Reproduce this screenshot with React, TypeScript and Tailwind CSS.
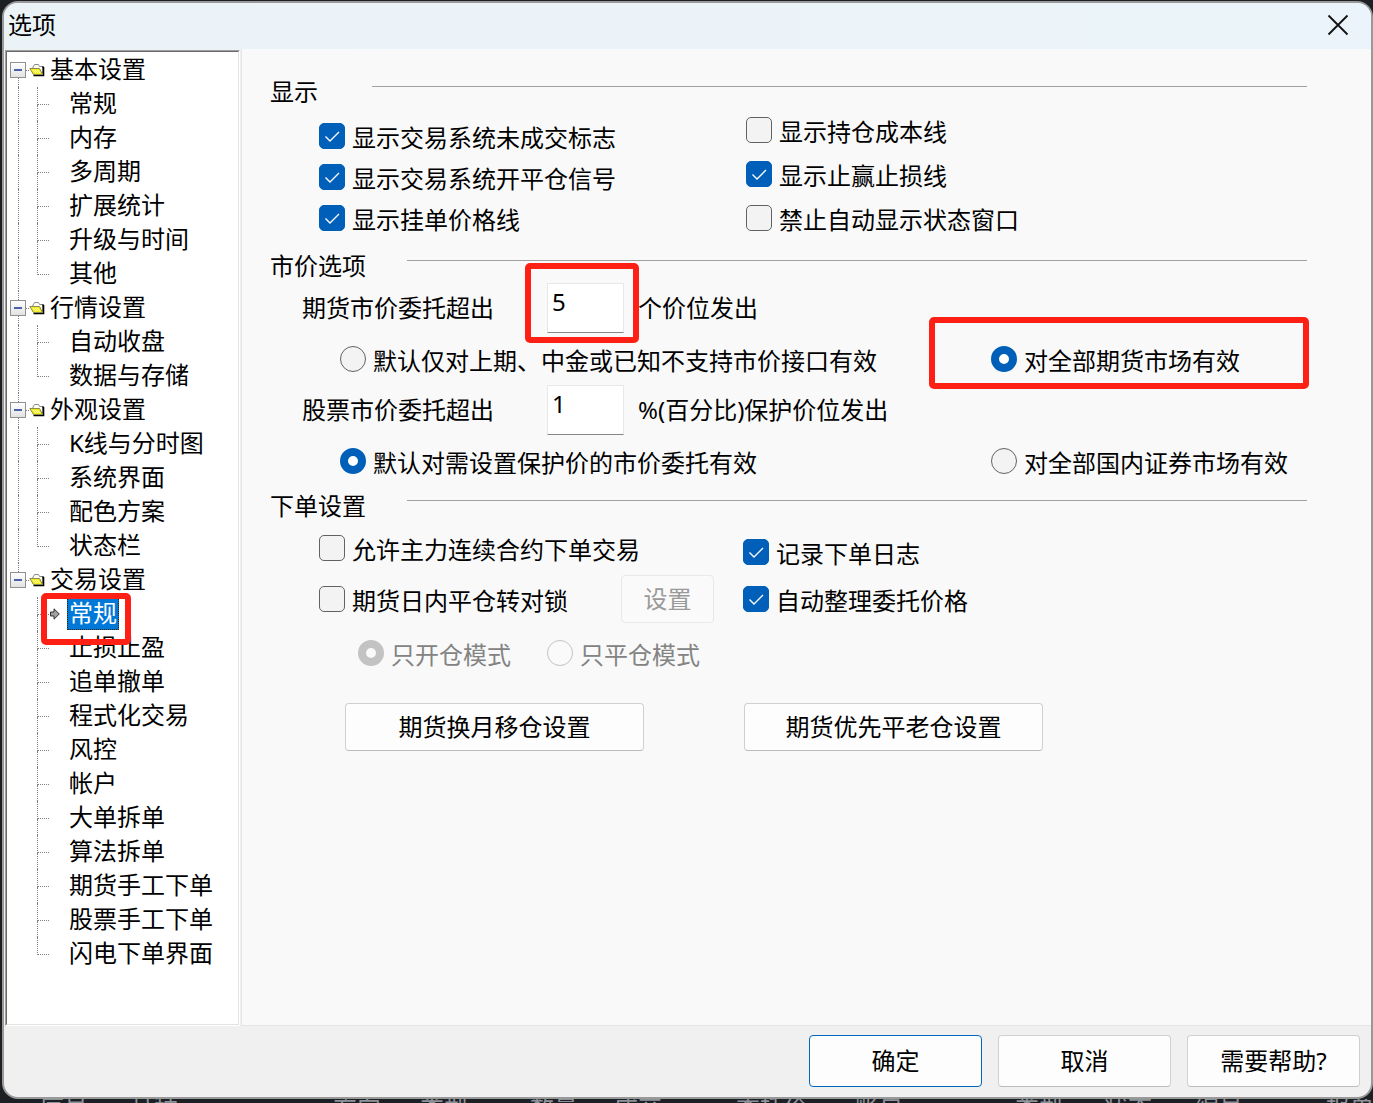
import { useState, type ReactNode } from "react";

type Group = { title: string; items: string[] };

const tree: Group[] = [
  { title: "基本设置", items: ["常规", "内存", "多周期", "扩展统计", "升级与时间", "其他"] },
  { title: "行情设置", items: ["自动收盘", "数据与存储"] },
  { title: "外观设置", items: ["K线与分时图", "系统界面", "配色方案", "状态栏"] },
  {
    title: "交易设置",
    items: ["常规", "止损止盈", "追单撤单", "程式化交易", "风控", "帐户", "大单拆单", "算法拆单", "期货手工下单", "股票手工下单", "闪电下单界面"],
  },
];

function Folder() {
  return (
    <svg width="16" height="14" viewBox="0 0 16 14" aria-hidden="true">
      <path d="M4 4L5.500 1.500H9.500L10.500 3.500H13.500V11.500H4.500L3.500 8z" fill="#fffef0" stroke="#8a8a8a" />
      <path d="M13.500 3.500L14.500 4.500V12.500H4.500" fill="none" stroke="#000" strokeWidth="1.600" />
      <path d="M.8 5.500H10.500L13.500 11.500H4.500z" fill="#f1ee1c" stroke="#8a8a50" />
      <path
        d="M4 7h1v1h-1zM6 7h1v1h-1zM8 7h1v1h-1zM5 8h1v1h-1zM7 8h1v1h-1zM9 8h1v1h-1zM6 9h1v1h-1zM8 9h1v1h-1zM10 9h1v1h-1z"
        fill="#fffbb0"
        shapeRendering="crispEdges"
      />
    </svg>
  );
}

function RedFrame({ className }: { className: string }) {
  return <span aria-hidden="true" className={`pointer-events-none absolute z-10 rounded-[5px] border-6 border-[#ff2015] ${className}`} />;
}

function TreeChild({ text, last, trunk, selected }: { text: string; last: boolean; trunk: boolean; selected: boolean }) {
  return (
    <li className="relative flex h-[34px] items-center">
      <span className={`ml-2 h-full w-[19px] shrink-0 ${trunk ? "border-l border-dotted border-[#808080]" : "border-l border-transparent"}`} />
      <span className="flex h-full w-3 shrink-0 flex-col">
        <span className="h-[18px] border-b border-l border-dotted border-[#808080]" />
        {!last && <span className="flex-1 border-l border-dotted border-[#808080]" />}
      </span>
      <span className="flex w-[18px] shrink-0 justify-start pl-px">
        {selected && (
          <svg width="10" height="12" viewBox="0 0 10 12" aria-hidden="true">
            <path d="M.5 4H4V.8L9.3 6 4 11.2V8H.5z" fill="#a0a0a0" stroke="#303030" />
          </svg>
        )}
      </span>
      <button
        type="button"
        className={`h-8 whitespace-nowrap border border-dotted px-px pb-0.5 leading-7 ${selected ? "border-[#402000] bg-[#0078d7] text-white" : "border-transparent"}`}
      >
        {text}
      </button>
      {selected && <RedFrame className="-top-1 left-[31px] h-[52px] w-[90px]" />}
    </li>
  );
}

function TreeGroup({ group, first, last }: { group: Group; first: boolean; last: boolean }) {
  const [open, setOpen] = useState(true);
  return (
    <li>
      <div className="flex h-[34px] items-center">
        <span className="flex h-full w-4 shrink-0 flex-col">
          <span className={`ml-2 flex-1 border-l border-dotted ${first ? "border-transparent" : "border-[#808080]"}`} />
          <button
            type="button"
            aria-label={group.title}
            aria-expanded={open}
            onClick={() => setOpen(!open)}
            className="flex size-4 items-center justify-center border border-[#919191] bg-linear-to-b from-white to-[#e2e2e2]"
          >
            <span className="h-[2px] w-2 bg-[#4b63a7]" />
          </button>
          <span className={`ml-2 flex-1 border-l border-dotted ${last ? "border-transparent" : "border-[#808080]"}`} />
        </span>
        <span className="w-[3px] border-t border-dotted border-[#808080]" />
        <Folder />
        <span className="ml-[5px] whitespace-nowrap pb-0.5">{group.title}</span>
      </div>
      {open && (
        <ul>
          {group.items.map((t, i) => (
            <TreeChild key={t} text={t} last={i === group.items.length - 1} trunk={!last} selected={last && i === 0} />
          ))}
        </ul>
      )}
    </li>
  );
}

function Check({ label, checked = false }: { label: string; checked?: boolean }) {
  return (
    <label className="flex h-[26px] items-center gap-[7px] whitespace-nowrap">
      <span className="grid shrink-0">
        <input
          type="checkbox"
          defaultChecked={checked}
          className="peer size-[26px] appearance-none rounded-[5px] border border-[#626262] bg-[#f3f3f3] [grid-area:1/1] checked:border-[#005fb8] checked:bg-[#005fb8]"
        />
        <svg viewBox="0 0 26 26" className="pointer-events-none invisible size-[26px] [grid-area:1/1] peer-checked:visible" aria-hidden="true">
          <path d="M6.500 13.500l4.500 4.500 9-9" fill="none" stroke="#fff" strokeWidth="1.400" />
        </svg>
      </span>
      <span className="mt-1">{label}</span>
    </label>
  );
}

function Radio({ label, name, checked = false, disabled = false }: { label: string; name: string; checked?: boolean; disabled?: boolean }) {
  return (
    <label className={`flex h-8 items-center gap-[7px] whitespace-nowrap ${disabled ? "text-[#838383]" : ""}`}>
      <input
        type="radio"
        name={name}
        defaultChecked={checked}
        disabled={disabled}
        className="size-[26px] shrink-0 appearance-none rounded-full border border-[#626262] bg-[#f3f3f3] checked:border-8 checked:border-[#005fb8] checked:bg-white disabled:border-[#c3c3c3] disabled:bg-[#fafafa] disabled:checked:border-[#c3c3c3]"
      />
      <span className="pt-1">{label}</span>
    </label>
  );
}

function Heading({ children, wide = false }: { children: ReactNode; wide?: boolean }) {
  return (
    <div className="flex h-8 items-start">
      <h2 className={wide ? "mr-[54px]" : "mr-[41px]"}>{children}</h2>
      <span className="mt-[10px] h-px flex-1 bg-[#a0a0a0]" />
    </div>
  );
}

function Push({ children, className, disabled = false }: { children: ReactNode; className: string; disabled?: boolean }) {
  return (
    <button
      type="button"
      disabled={disabled}
      className={`rounded-[4px] border bg-[#fdfdfd] disabled:border-[#e8e8e8] disabled:bg-[#fafafa] disabled:text-[#9a9a9a] ${className}`}
    >
      {children}
    </button>
  );
}

const numberBox = "h-[50px] w-[77px] border border-[#e8e8e8] border-b-[#868686] bg-white px-1 pb-[13px]";

const behind = [
  ["序号", 40], ["品种", 130], ["方向", 333], ["类型", 420], ["数量", 530], ["成交", 614], ["委托价", 736], ["账户", 855], ["类型", 1015], ["状态", 1104], ["编号", 1195], ["报单", 1326],
] as const;

export default function App() {
  return (
    <div className="relative flex min-h-screen flex-col overflow-hidden bg-[#1c1f24] pt-px pb-1 pl-[2px] font-['Noto_Sans','Noto_Sans_CJK_SC',sans-serif] text-2xl leading-8 text-black">
      <div aria-hidden="true" className="absolute inset-x-0 bottom-0 h-1 overflow-hidden text-[#8d9298]">
        {behind.map(([t, x]) => (
          <span key={x} className="absolute -top-2 whitespace-nowrap leading-8" style={{ left: x }}>
            {t}
          </span>
        ))}
      </div>
      <main className="relative flex flex-1 flex-col overflow-hidden rounded-[16px] border-2 border-[#999] bg-[#f0f0f0]">
        <header className="flex h-[46px] items-center justify-between bg-linear-to-r from-[#ebf3f7] to-[#ebf4fa] pr-[22px] pb-0.5 pl-1">
          <h1>选项</h1>
          <button type="button" aria-label="关闭">
            <svg width="22" height="22" viewBox="0 0 22 22" aria-hidden="true">
              <path d="M1.500 1.500l19 19M20.500 1.500l-19 19" stroke="#111" strokeWidth="1.800" />
            </svg>
          </button>
        </header>
        <div className="flex flex-1">
          <nav className="mt-px ml-px w-[235px] shrink-0 border border-t-[#a0a0a0] border-r-white border-b-white border-l-[#a0a0a0] bg-white">
            <ul className="h-full border border-t-[#696969] border-r-[#e3e3e3] border-b-[#e3e3e3] border-l-[#696969] pt-px pl-[3px]">
              {tree.map((g, i) => (
                <TreeGroup key={g.title} group={g} first={i === 0} last={i === tree.length - 1} />
              ))}
            </ul>
          </nav>
          <section className="ml-px flex-1 border-b border-l border-[#e5e5e5] bg-[#f9f9f9] pt-[27px] pr-16 pb-8 pl-7">
            <Heading wide>显示</Heading>
            <div className="mt-[9px] grid grid-cols-[427px_1fr] pl-[49px]">
              <div className="flex flex-col gap-[15px] pt-[6px]">
                <Check label="显示交易系统未成交标志" checked />
                <Check label="显示交易系统开平仓信号" checked />
                <Check label="显示挂单价格线" checked />
              </div>
              <div className="flex flex-col gap-[18px]">
                <Check label="显示持仓成本线" />
                <Check label="显示止赢止损线" checked />
                <Check label="禁止自动显示状态窗口" />
              </div>
            </div>

            <div className="mt-[19px]">
              <Heading>市价选项</Heading>
            </div>
            <div className="mt-px flex flex-col gap-[10px] pl-8">
              <div className="flex items-center">
                <label htmlFor="futures" className="w-[245px]">期货市价委托超出</label>
                <span className="relative mr-[14px] flex">
                  <input id="futures" defaultValue="5" className={numberBox} />
                  <RedFrame className="-top-5 -left-[22px] h-20 w-[114px]" />
                </span>
                <span>个价位发出</span>
              </div>
              <div className="grid grid-cols-[651px_1fr] pl-[38px]">
                <Radio name="futures-scope" label="默认仅对上期、中金或已知不支持市价接口有效" />
                <div className="relative">
                  <Radio name="futures-scope" label="对全部期货市场有效" checked />
                  <RedFrame className="-top-[26px] -left-[62px] h-[72px] w-[380px]" />
                </div>
              </div>
              <div className="flex items-center">
                <label htmlFor="stocks" className="w-[245px]">股票市价委托超出</label>
                <input id="stocks" defaultValue="1" className={`mr-[14px] ${numberBox}`} />
                <span>%(百分比)保护价位发出</span>
              </div>
              <div className="grid grid-cols-[651px_1fr] pl-[38px]">
                <Radio name="stocks-scope" label="默认对需设置保护价的市价委托有效" checked />
                <Radio name="stocks-scope" label="对全部国内证券市场有效" />
              </div>
            </div>

            <div className="mt-[13px]">
              <Heading>下单设置</Heading>
            </div>
            <div className="mt-[13px] grid grid-cols-[424px_1fr] pl-[49px]">
              <div>
                <Check label="允许主力连续合约下单交易" />
                <div className="mt-[14px] flex items-center">
                  <div className="w-[302px]">
                    <Check label="期货日内平仓转对锁" />
                  </div>
                  <Push disabled className="h-12 w-[93px]">设置</Push>
                </div>
                <div className="mt-[14px] flex pl-[39px]">
                  <div className="w-[189px]">
                    <Radio name="mode" label="只开仓模式" checked disabled />
                  </div>
                  <Radio name="mode" label="只平仓模式" disabled />
                </div>
              </div>
              <div className="flex flex-col gap-[21px] pt-1">
                <Check label="记录下单日志" checked />
                <Check label="自动整理委托价格" checked />
              </div>
            </div>
            <div className="mt-[34px] flex gap-[100px] pl-[75px]">
              <Push className="h-12 w-[299px] border-[#d0d0d0] border-b-[#bcbcbc]">期货换月移仓设置</Push>
              <Push className="h-12 w-[299px] border-[#d0d0d0] border-b-[#bcbcbc]">期货优先平老仓设置</Push>
            </div>
          </section>
        </div>
        <footer className="flex justify-end gap-4 pt-[9px] pr-[11px] pb-[10px]">
          <Push className="h-[52px] w-[173px] border-[#0067c0]">确定</Push>
          <Push className="h-[52px] w-[173px] border-[#d0d0d0] border-b-[#bcbcbc]">取消</Push>
          <Push className="h-[52px] w-[173px] border-[#d0d0d0] border-b-[#bcbcbc]">需要帮助?</Push>
        </footer>
      </main>
    </div>
  );
}
